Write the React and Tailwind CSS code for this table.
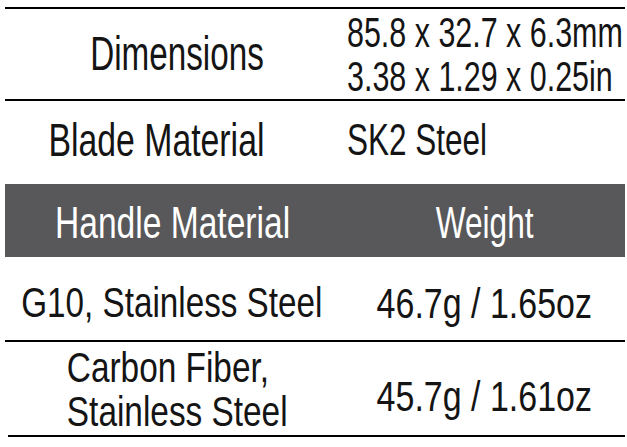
import React from 'react';

const font = "font-['Liberation_Sans','Arial',sans-serif]";

export default function App() {
  return (
    <div className={`h-[447px] overflow-hidden bg-white text-[#141414] ${font} pt-[7px] pl-[5px]`}>
      <div className="w-[620px] overflow-hidden">
        {/* spec table */}
        <div className="border-t-2 border-black">
          <div className="grid grid-cols-[342px_1fr] h-[90px]">
            <div className="flex items-center justify-end pr-[83px]">
              <span className="inline-block origin-right scale-x-[0.692] text-[48px] leading-[48px]">Dimensions</span>
            </div>
            <div className="flex items-center overflow-hidden">
              <span className="inline-block origin-left scale-x-[0.708] text-[43px] leading-[44px] whitespace-nowrap">
                85.8 x 32.7 x 6.3mm
                <br />
                3.38 x 1.29 x 0.25in
              </span>
            </div>
          </div>
          <div className="grid grid-cols-[342px_1fr] h-[85px] border-t-2 border-black pb-[6px]">
            <div className="flex items-center justify-end pr-[83px]">
              <span className="inline-block origin-right scale-x-[0.719] text-[47px] leading-[46px] whitespace-nowrap">Blade Material</span>
            </div>
            <div className="flex items-center">
              <span className="inline-block origin-left scale-x-[0.716] text-[44px] leading-[46px] whitespace-nowrap">SK2 Steel</span>
            </div>
          </div>
        </div>

        {/* weight table */}
        <div className="grid grid-cols-[334px_1fr] h-[73px] bg-[#58585a] text-white pt-[4px] pl-[1px]">
          <div className="flex items-center justify-center">
            <span className="inline-block scale-x-[0.746] text-[45px] leading-[44px] whitespace-nowrap">Handle Material</span>
          </div>
          <div className="flex items-center justify-center pl-[4px]">
            <span className="inline-block scale-x-[0.702] text-[45px] leading-[44px]">Weight</span>
          </div>
        </div>
        <div className="grid grid-cols-[334px_1fr] h-[83px] pt-[6px]">
          <div className="flex items-center justify-center">
            <span className="inline-block scale-x-[0.773] text-[43px] leading-[44px] whitespace-nowrap">G10, Stainless Steel</span>
          </div>
          <div className="flex items-center justify-center pl-[4px] pt-[2px]">
            <span className="inline-block scale-x-[0.79] text-[43px] leading-[44px] whitespace-nowrap">46.7g / 1.65oz</span>
          </div>
        </div>
        <div className="grid grid-cols-[334px_1fr] h-[95px] border-t-2 border-black">
          <div className="flex items-center justify-center pl-[10px]">
            <span className="inline-block scale-x-[0.776] text-[43px] leading-[44px] text-left whitespace-nowrap">
              Carbon Fiber,
              <br />
              Stainless Steel
            </span>
          </div>
          <div className="flex items-center justify-center pl-[4px] pt-[15px]">
            <span className="inline-block scale-x-[0.79] text-[43px] leading-[44px] whitespace-nowrap">45.7g / 1.61oz</span>
          </div>
        </div>
        <div className="ml-[3px] border-t-2 border-black" />
      </div>
    </div>
  );
}
